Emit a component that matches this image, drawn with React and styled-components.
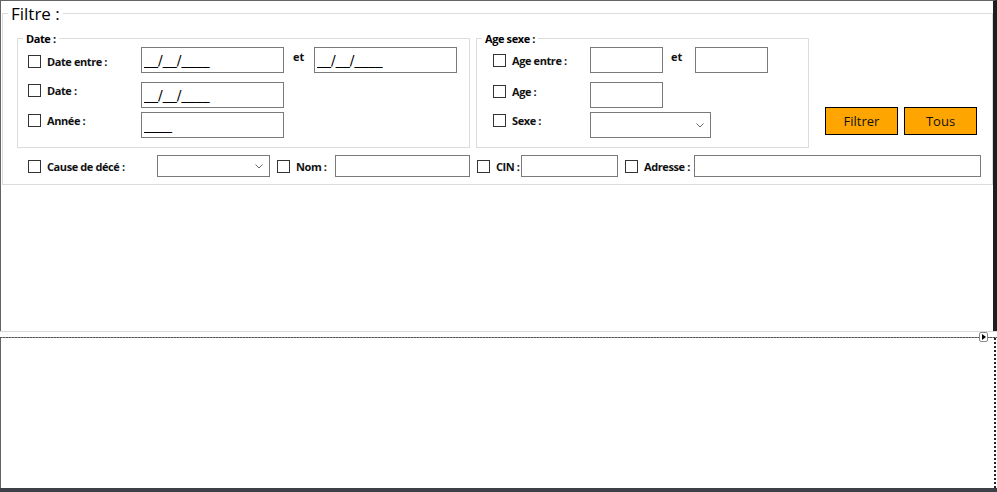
import React from "react";
import styled, { createGlobalStyle } from "styled-components";

const GlobalStyle = createGlobalStyle`
  html, body { margin: 0; padding: 0; background: #fff; }
  body { font-family: "Open Sans", "Noto Sans", sans-serif; color: #000; }
`;

const Window = styled.div`
  width: 997px;
  height: 492px;
  display: flex;
  flex-direction: column;
  background: #fff;
  overflow: hidden;
`;

const TopPane = styled.div`
  height: 331px;
  box-sizing: border-box;
  border-top: 1px solid #646464;
  border-left: 1px solid #646464;
  border-right: 4px solid #1e1e1e;
  padding-left: 1px;
`;

const FilterSet = styled.fieldset`
  margin: 2px 0 0;
  padding: 8px 0 7px;
  border: 1px solid #dcdcdc;
  min-width: 0;
`;

const BigLegend = styled.legend`
  font-size: 17px;
  line-height: 21px;
  padding: 0 3px;
  margin-left: 5px;
  color: #000;
`;

const TopRow = styled.div`
  display: flex;
  align-items: flex-start;
  padding-left: 14px;
`;

const GroupSet = styled.fieldset`
  width: ${(p) => p.$w}px;
  box-sizing: border-box;
  margin: 0 0 0 ${(p) => p.$ml || 0}px;
  padding: 2px 0 9px;
  border: 1px solid #dcdcdc;
  min-width: 0;
`;

const SmallLegend = styled.legend`
  font-size: 11px;
  font-weight: 700;
  letter-spacing: -0.4px;
  line-height: 13px;
  padding: 0 3px;
  margin-left: 5px;
`;

const Rows = styled.div`
  padding-left: ${(p) => p.$pl}px;
`;

const Row = styled.div`
  display: flex;
  height: 26px;
  margin-top: ${(p) => p.$mt || 0}px;
`;

const LabelCell = styled.label`
  width: ${(p) => p.$w}px;
  flex: none;
  display: flex;
  align-items: center;
  gap: 6px;
  align-self: ${(p) => (p.$top === undefined ? "center" : "flex-start")};
  margin-top: ${(p) => p.$top || 0}px;
`;

const Check = styled.input.attrs({ type: "checkbox" })`
  appearance: none;
  width: 13px;
  height: 13px;
  margin: 0;
  flex: none;
  box-sizing: border-box;
  border: 1px solid #333;
  background: #fff;
`;

const LabelText = styled.span`
  font-size: 11px;
  font-weight: 700;
  letter-spacing: -0.4px;
  line-height: 13px;
  white-space: nowrap;
  color: #111;
`;

const EtCell = styled.span`
  width: ${(p) => p.$w}px;
  flex: none;
  box-sizing: border-box;
  padding-left: ${(p) => p.$pl}px;
  margin-top: 3px;
  font-size: 11px;
  font-weight: 700;
  line-height: 13px;
  color: #111;
`;

const TextBox = styled.input`
  width: ${(p) => p.$w}px;
  height: ${(p) => p.$h || 26}px;
  flex: none;
  box-sizing: border-box;
  margin: 0;
  padding: 0 2px;
  border: 1px solid #7a7a7a;
  background: #fff;
  font-family: "DejaVu Sans", sans-serif;
  font-size: 14px;
  color: #000;
  outline: none;
`;

const Combo = styled.div`
  width: ${(p) => p.$w}px;
  height: ${(p) => p.$h}px;
  flex: none;
  box-sizing: border-box;
  border: 1px solid #7a7a7a;
  background: #fff;
  display: flex;
  align-items: center;
  justify-content: flex-end;
  padding-right: 6px;
`;

const ButtonGroup = styled.div`
  display: flex;
  gap: 6px;
  margin: 75px 0 0 16px;
`;

const OrangeButton = styled.button`
  width: 73px;
  height: 28px;
  margin: 0;
  padding: 0;
  box-sizing: border-box;
  border: 1px solid #000;
  background: #ffa500;
  font-family: "Open Sans", sans-serif;
  font-size: 13px;
  color: #111;
`;

const BottomRow = styled.div`
  display: flex;
  align-items: center;
  gap: 7px;
  height: 22px;
  margin-top: 7px;
  padding-left: 25px;
`;

const Field = styled.div`
  display: flex;
  align-items: center;
`;

const Splitter = styled.div`
  position: relative;
  height: 7px;
  box-sizing: border-box;
  border-top: 1px solid #d9d9d9;

  &::after {
    content: "";
    position: absolute;
    left: 0;
    right: 0;
    bottom: 0;
    height: 1px;
    background: repeating-linear-gradient(90deg, #555 0 2px, #8c8c8c 2px 3px);
  }
`;

const SplitButton = styled.div`
  position: absolute;
  right: 9px;
  top: 0;
  z-index: 1;
  width: 9px;
  height: 10px;
  box-sizing: border-box;
  border: 1px solid #8a8a8a;
  border-radius: 2px;
  background: #fff;
  display: flex;
  align-items: center;
  justify-content: center;

  &::after {
    content: "";
    border-left: 4px solid #000;
    border-top: 3px solid transparent;
    border-bottom: 3px solid transparent;
  }
`;

const BottomPane = styled.div`
  flex: 1;
  box-sizing: border-box;
  border-left: 1px solid #646464;
  border-right: 2px dotted #222;
  margin-right: 1px;
`;

const StatusBar = styled.div`
  height: 4px;
  background: #3d4047;
`;

const Chevron = () => (
  <svg width="8" height="5" viewBox="0 0 8 5">
    <polyline points="0.5,0.5 4,4 7.5,0.5" fill="none" stroke="#6b6b6b" strokeWidth="1" />
  </svg>
);

const MASK = "__/__/____";

export default function App() {
  return (
    <>
      <GlobalStyle />
      <Window>
        <TopPane>
          <FilterSet>
            <BigLegend>Filtre :</BigLegend>
            <TopRow>
              <GroupSet $w={453}>
                <SmallLegend>Date :</SmallLegend>
                <Rows $pl={10}>
                  <Row>
                    <LabelCell $w={113} $top={8}>
                      <Check />
                      <LabelText>Date entre :</LabelText>
                    </LabelCell>
                    <TextBox $w={143} value={MASK} readOnly />
                    <EtCell $w={30} $pl={9}>et</EtCell>
                    <TextBox $w={143} value={MASK} readOnly />
                  </Row>
                  <Row $mt={9}>
                    <LabelCell $w={113} $top={2}>
                      <Check />
                      <LabelText>Date :</LabelText>
                    </LabelCell>
                    <TextBox $w={143} value={MASK} readOnly />
                  </Row>
                  <Row $mt={4}>
                    <LabelCell $w={113} $top={2}>
                      <Check />
                      <LabelText>Année :</LabelText>
                    </LabelCell>
                    <TextBox $w={143} value="____" readOnly />
                  </Row>
                </Rows>
              </GroupSet>

              <GroupSet $w={333} $ml={6}>
                <SmallLegend>Age sexe :</SmallLegend>
                <Rows $pl={16}>
                  <Row>
                    <LabelCell $w={97} $top={7}>
                      <Check />
                      <LabelText>Age entre :</LabelText>
                    </LabelCell>
                    <TextBox $w={73} />
                    <EtCell $w={32} $pl={8}>et</EtCell>
                    <TextBox $w={73} />
                  </Row>
                  <Row $mt={9}>
                    <LabelCell $w={97} $top={3}>
                      <Check />
                      <LabelText>Age :</LabelText>
                    </LabelCell>
                    <TextBox $w={73} />
                  </Row>
                  <Row $mt={4}>
                    <LabelCell $w={97} $top={2}>
                      <Check />
                      <LabelText>Sexe :</LabelText>
                    </LabelCell>
                    <Combo $w={121} $h={26}>
                      <Chevron />
                    </Combo>
                  </Row>
                </Rows>
              </GroupSet>

              <ButtonGroup>
                <OrangeButton>Filtrer</OrangeButton>
                <OrangeButton>Tous</OrangeButton>
              </ButtonGroup>
            </TopRow>

            <BottomRow>
              <Field>
                <LabelCell $w={129}>
                  <Check />
                  <LabelText>Cause de décé :</LabelText>
                </LabelCell>
                <Combo $w={113} $h={22}>
                  <Chevron />
                </Combo>
              </Field>
              <Field>
                <LabelCell $w={58}>
                  <Check />
                  <LabelText>Nom :</LabelText>
                </LabelCell>
                <TextBox $w={135} $h={22} />
              </Field>
              <Field>
                <LabelCell $w={44}>
                  <Check />
                  <LabelText>CIN :</LabelText>
                </LabelCell>
                <TextBox $w={97} $h={22} />
              </Field>
              <Field>
                <LabelCell $w={69}>
                  <Check />
                  <LabelText>Adresse :</LabelText>
                </LabelCell>
                <TextBox $w={287} $h={22} />
              </Field>
            </BottomRow>
          </FilterSet>
        </TopPane>

        <Splitter>
          <SplitButton />
        </Splitter>
        <BottomPane />
        <StatusBar />
      </Window>
    </>
  );
}
